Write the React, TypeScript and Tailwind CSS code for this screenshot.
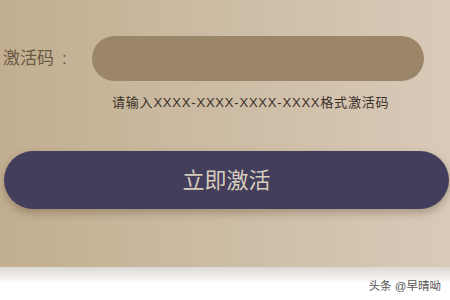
export default function App() {
  return (
    <div className="flex h-[300px] w-[450px] flex-col overflow-hidden bg-white font-['Liberation_Sans','Noto_Sans_CJK_SC',sans-serif]">
      <div className="flex h-[267px] shrink-0 flex-col bg-gradient-to-r from-[#c2af91] via-[#cdbca4] to-[#d9cab9]">
        <div className="mt-[36px] flex items-center">
          <label className="flex w-[92px] shrink-0 pl-[3px] text-[17px] leading-[20px] text-[#6b5943]">
            激活码<span className="ml-[8px]">:</span>
          </label>
          <div className="h-[45px] w-[332px] rounded-full bg-[#9c8669]" />
        </div>
        <p className="mt-[14px] pl-[112px] text-[13px] leading-[16px] tracking-[0.8px] text-[#3a2f29]">
          请输入XXXX-XXXX-XXXX-XXXX格式激活码
        </p>
        <button className="mt-[40px] ml-[4px] flex h-[58px] w-[445px] items-center justify-center rounded-full bg-[#433e5b] text-[22px] text-[#d8ccbd] shadow-[0_4px_8px_rgba(80,60,40,0.35)]">
          立即激活
        </button>
      </div>
      <div className="flex flex-1 flex-col bg-gradient-to-b from-[#dcd8d4] via-white to-white">
        <div className="mt-[12px] pr-[9px] text-right text-[11.5px] leading-[14px] text-[#555]">头条 @早晴呦</div>
      </div>
    </div>
  )
}
